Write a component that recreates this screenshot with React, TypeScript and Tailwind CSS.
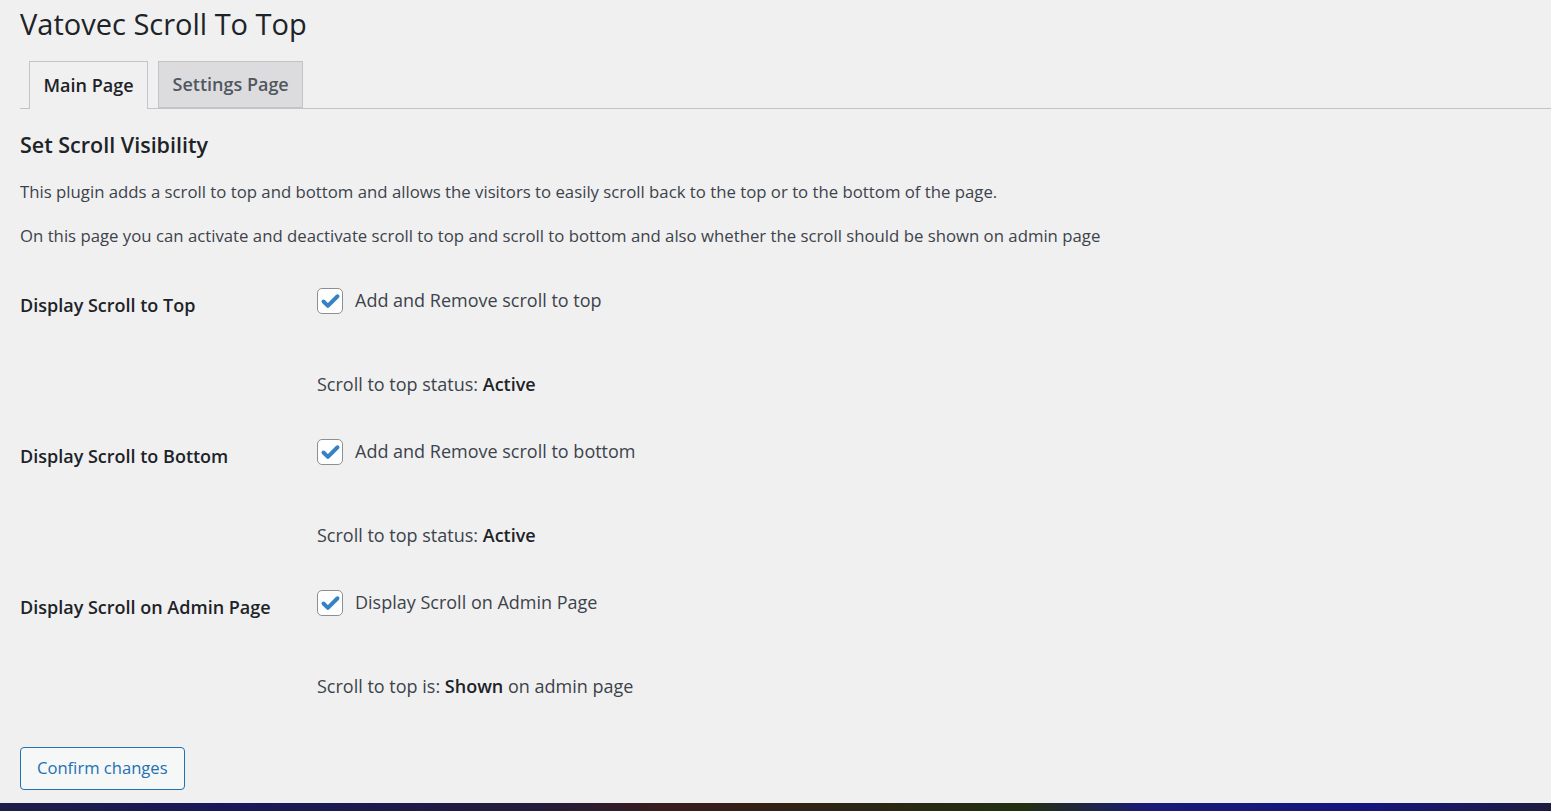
import { Check } from "lucide-react"

interface SettingRowProps {
    label: string
    checkboxText: string
    status: React.ReactNode
}

function SettingRow({ label, checkboxText, status }: SettingRowProps) {
    return (
        <div className="flex h-[151px]">
            <div className="w-[297px] pt-[11px] text-[18px] leading-[28px] font-semibold text-[#1d2327]">{label}</div>
            <div className="flex flex-col">
                <label className="flex items-center gap-[12px] h-[26px] mt-[8px]">
                    <span className="flex items-center justify-center w-[26px] h-[26px] rounded-[5px] border border-[#8c8f94] bg-white">
                        <Check className="size-[21px] text-[#3582c4]" strokeWidth={4.5} />
                    </span>
                    <span className="text-[18px] text-[#3c434a] -mt-[2px]">{checkboxText}</span>
                </label>
                <div className="mt-[56px] text-[18px] leading-[28px] text-[#3c434a]">{status}</div>
            </div>
        </div>
    )
}

export default function App() {
    return (
        <div className="min-h-[811px] flex flex-col bg-[#f0f0f1] font-['Open_Sans','Liberation_Sans',sans-serif]">
            <div className="flex-1 pl-[20px]">
                <h1 className="pt-[4px] text-[29px] leading-[40px] text-[#1d2327]">Vatovec Scroll To Top</h1>

                <nav className="mt-[17px] flex gap-[10px] pl-[9px] border-b border-[#c3c4c7] h-[48px]">
                    <div className="h-[48px] px-[13.5px] flex items-center border border-b-0 border-[#c3c4c7] bg-[#f0f0f1] text-[18px] font-semibold text-[#1d2327]">
                        Main Page
                    </div>
                    <div className="h-[47px] px-[13.5px] flex items-center border border-[#c3c4c7] bg-[#dcdcde] text-[18px] font-semibold text-[#50575e]">
                        Settings Page
                    </div>
                </nav>

                <h2 className="mt-[21px] text-[21.5px] leading-[30px] font-semibold text-[#1d2327]">Set Scroll Visibility</h2>
                <p className="mt-[20px] text-[16.75px] leading-[24px] text-[#3c434a]">
                    This plugin adds a scroll to top and bottom and allows the visitors to easily scroll back to the top or to the bottom of the page.
                </p>
                <p className="mt-[20px] text-[16.75px] leading-[24px] text-[#3c434a]">
                    On this page you can activate and deactivate scroll to top and scroll to bottom and also whether the scroll should be shown on admin page
                </p>

                <div className="mt-[32px] flex flex-col">
                    <SettingRow
                        label="Display Scroll to Top"
                        checkboxText="Add and Remove scroll to top"
                        status={<>Scroll to top status: <b className="font-semibold text-[#1d2327]">Active</b></>}
                    />
                    <SettingRow
                        label="Display Scroll to Bottom"
                        checkboxText="Add and Remove scroll to bottom"
                        status={<>Scroll to top status: <b className="font-semibold text-[#1d2327]">Active</b></>}
                    />
                    <SettingRow
                        label="Display Scroll on Admin Page"
                        checkboxText="Display Scroll on Admin Page"
                        status={<>Scroll to top is: <b className="font-semibold text-[#1d2327]">Shown</b> on admin page</>}
                    />
                </div>

                <button className="mt-[14px] h-[43px] px-[16px] rounded-[4px] border border-[#2271b1] bg-[#f6f7f7] text-[16.6px] text-[#2271b1]">
                    Confirm changes
                </button>
            </div>
            <div className="h-[8px] mt-[13px] bg-[linear-gradient(90deg,#1c1f48_0%,#18185a_15%,#241c3a_35%,#3a1c1c_43%,#2c2414_55%,#22300f_66%,#1a1a78_74%,#16157e_88%,#1e1b40_100%)]" />
        </div>
    )
}
